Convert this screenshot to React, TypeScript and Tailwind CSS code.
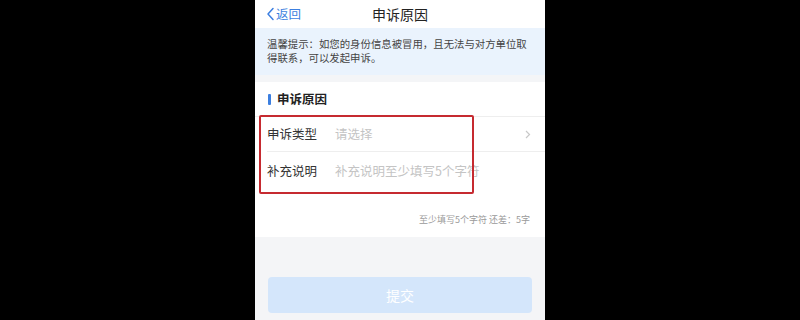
import React from "react";

export default function App() {
  const font = { fontFamily: '"Noto Sans CJK SC", "Noto Sans", sans-serif' };
  return (
    <div className="w-[800px] h-[320px] bg-black overflow-hidden" style={font}>
      <div className="relative mx-auto w-[290px] h-[320px] bg-[#f4f5f7] flex flex-col">
        {/* header */}
        <div className="h-[28px] bg-white flex items-center relative shrink-0">
          <div className="flex items-center pl-[11px] text-[#3c7fe0] text-[12.5px]">
            <svg width="9" height="14" viewBox="0 0 9 14" className="mr-[1px]">
              <path d="M7 1.5 L2 7 L7 12.5" fill="none" stroke="#3c7fe0" strokeWidth="1.5" strokeLinecap="round" strokeLinejoin="round" />
            </svg>
            <span>返回</span>
          </div>
          <div className="absolute left-0 right-0 text-center text-[14px] text-[#222] pointer-events-none">申诉原因</div>
        </div>
        {/* tip */}
        <div className="bg-[#eaf3fd] px-[12px] pt-[9px] pb-[10px] text-[10.4px] leading-[14px] text-[#444] h-[47px] shrink-0">
          温馨提示：如您的身份信息被冒用，且无法与对方单位取得联系，可以发起申诉。
        </div>
        <div className="h-[7px] shrink-0" />
        {/* section */}
        <div className="bg-white shrink-0">
          <div className="h-[35px] flex items-center pl-[13px] border-b border-[#eeeeee]">
            <div className="w-[3px] h-[11px] bg-[#3c7fe0] rounded-[1px] mr-[6px]" />
            <span className="text-[12.5px] font-bold text-[#222]">申诉原因</span>
          </div>
          <div className="pl-[12px]">
            <div className="h-[35px] flex items-center pr-[14px] border-b border-[#eeeeee]">
              <span className="w-[68px] text-[12.5px] text-[#333]">申诉类型</span>
              <span className="flex-1 text-[12.5px] text-[#c4c4c4]">请选择</span>
              <svg width="6" height="9" viewBox="0 0 6 9">
                <path d="M1 1 L4.5 4.5 L1 8" fill="none" stroke="#c8c8c8" strokeWidth="1.2" />
              </svg>
            </div>
            <div className="h-[38px] flex items-center">
              <span className="w-[68px] text-[12.5px] text-[#333]">补充说明</span>
              <span className="flex-1 text-[12.5px] text-[#c4c4c4]">补充说明至少填写5个字符</span>
            </div>
          </div>
          <div className="h-[47px] flex items-end justify-end pr-[15px] pb-[11px]">
            <span className="text-[9px] text-[#9a9a9a]">至少填写5个字符 还差：5字</span>
          </div>
        </div>
        {/* bottom */}
        <div className="flex-1 px-[13px] pt-[40px]">
          <div className="h-[36px] rounded-[4px] bg-[#d4e6fb] flex items-center justify-center text-white text-[14px]">
            提交
          </div>
        </div>
        {/* red highlight box */}
        <div className="absolute left-[4px] top-[115px] w-[215px] h-[79px] border-[2.5px] border-[#c62a30] rounded-[2px]" />
      </div>
    </div>
  );
}
